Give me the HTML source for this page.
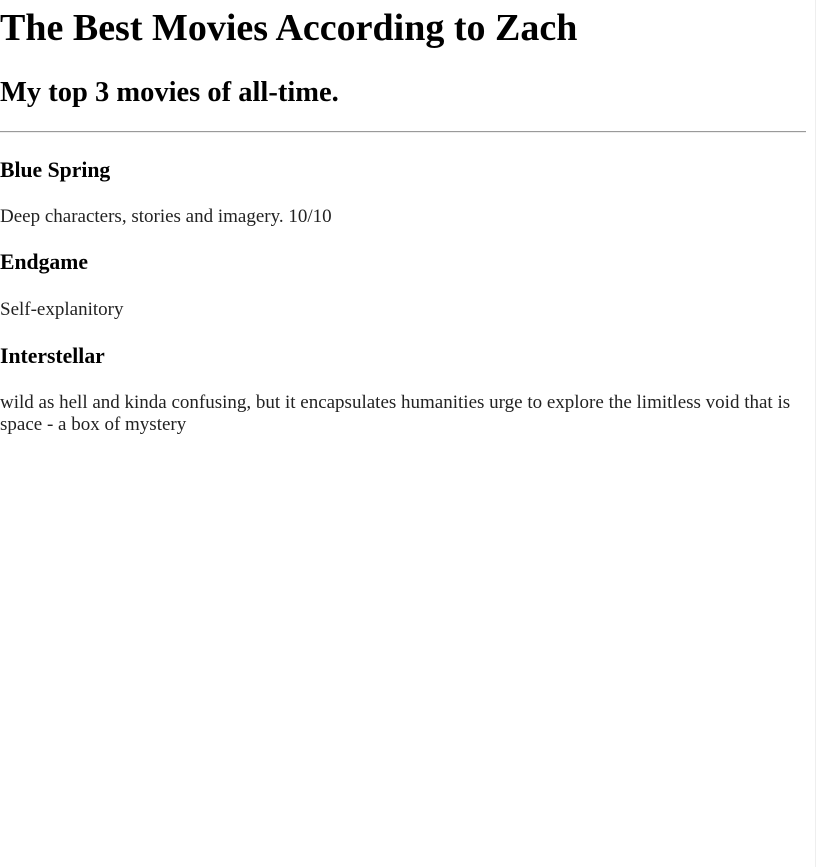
<!DOCTYPE html>
<html><head><style>
html,body{margin:0;padding:0;background:#fff;}
body{font-family:"Liberation Serif",serif;color:#000;width:806px;height:867px;position:relative;}
.edge{position:absolute;left:815px;top:0;width:1px;height:867px;background:#eee;}
h1,h2,h3,p{margin:0;}
h1{font-size:38px;line-height:44px;padding-top:6px;}
h2{font-size:28.5px;line-height:34px;margin-top:26px;}
hr{margin:21px 0 0;border:0;border-top:1px solid #9a9a9a;border-bottom:1px solid #eee;height:0;}
h3{font-size:21.7px;line-height:26px;margin-top:21px;}
h3.first{margin-top:24px;}
p{font-size:19px;line-height:22px;margin-top:23px;color:#222;}
</style></head><body>
<div class="edge"></div>
<h1>The Best Movies According to Zach</h1>
<h2>My top 3 movies of all-time.</h2>
<hr>
<h3 class="first">Blue Spring</h3>
<p>Deep characters, stories and imagery. 10/10</p>
<h3>Endgame</h3>
<p style="margin-top:24px">Self-explanitory</p>
<h3 style="margin-top:22px">Interstellar</h3>
<p>wild as hell and kinda confusing, but it encapsulates humanities urge to explore the limitless void that is space - a box of mystery</p>
</body></html>
